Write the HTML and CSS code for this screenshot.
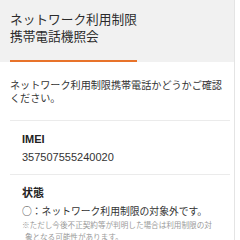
FILE: index.html
```html
<!DOCTYPE html>
<html lang="ja">
<head>
  <meta charset="UTF-8" />
  <meta name="viewport" content="width=device-width, initial-scale=1.0" />
  <title>ネットワーク利用制限携帯電話機照会</title>
  <link rel="stylesheet" href="styles.css">
</head>
<body>
  <div class="page">
    <header class="head">
      <h1 class="title">ネットワーク利用制限<br>携帯電話機照会</h1>
    </header>
    <p class="lead">ネットワーク利用制限携帯電話かどうかご確認ください。</p>
    <dl class="result">
      <div class="row">
        <dt>IMEI</dt>
        <dd class="imei">357507555240020</dd>
      </div>
      <div class="row">
        <dt>状態</dt>
        <dd>
          <p class="status">○：ネットワーク利用制限の対象外です。</p>
          <p class="note">※ただし今後不正契約等が判明した場合は利用制限の対象となる可能性があります。</p>
        </dd>
      </div>
    </dl>
  </div>
</body>
</html>
```

FILE: styles.css
```css
:root {
  --fg: #333333;
  --head-bg: #f1f1f1;
  --accent: #e8732a;
  --line: #ebebeb;
  --muted: #9a9a9a;
}
* { box-sizing: border-box; margin: 0; padding: 0; }
html, body { width: 100%; height: 100%; background: #fff; color: var(--fg); font-family: 'Liberation Sans', 'Noto Sans CJK JP', sans-serif; }
.page { width: 235px; min-height: 100%; border-right: 1px solid #e4e4e4; }
.head { background: var(--head-bg); padding: 12px 0 0 10px; }
.title { display: inline-block; font-size: 12.7px; line-height: 17px; font-weight: 400; color: #2b2b2b; padding-bottom: 14px; border-bottom: 2px solid var(--accent); }
.lead { font-size: 10.1px; line-height: 13px; padding: 17px 3px 15px 10px; }
.result { margin: 0 4px 0 10px; }
.row { border-top: 1px solid var(--line); padding: 11px 0 10px 12px; }
.row dt { font-size: 11px; line-height: 14px; font-weight: 700; color: #222; }
.row dd { margin-top: 4px; }
.imei { font-size: 11px; line-height: 14px; }
.status { font-family: 'Noto Sans CJK JP', sans-serif; font-size: 9.8px; line-height: 14px; }
.note { font-family: 'Noto Sans CJK JP', sans-serif; font-size: 7.6px; line-height: 12px; color: var(--muted); max-width: 196px; padding-left: 3px; text-indent: -3px; margin-top: 1px; }
```
